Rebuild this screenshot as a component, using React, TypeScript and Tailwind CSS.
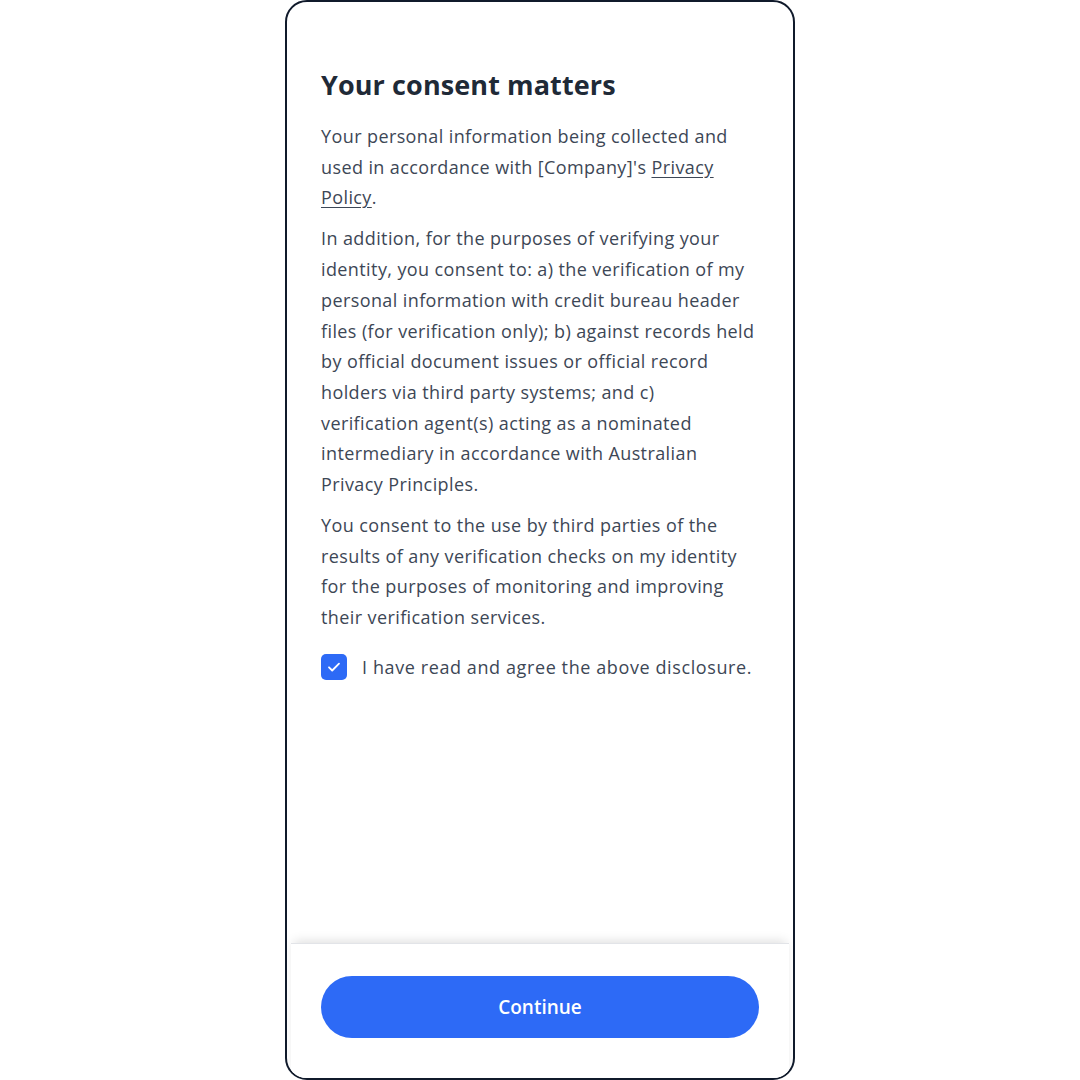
import React, { useState } from 'react';

const PARA_1 = ['Your personal information being collected and', "used in accordance with [Company]'s "];

const PARA_2 = [
  'In addition, for the purposes of verifying your',
  'identity, you consent to: a) the verification of my',
  'personal information with credit bureau header',
  'files (for verification only); b) against records held',
  'by official document issues or official record',
  'holders via third party systems; and c)',
  'verification agent(s) acting as a nominated',
  'intermediary in accordance with Australian',
  'Privacy Principles.',
];

const PARA_3 = [
  'You consent to the use by third parties of the',
  'results of any verification checks on my identity',
  'for the purposes of monitoring and improving',
  'their verification services.',
];

const Lines = ({ lines }: { lines: string[] }) => (
  <p>
    {lines.map((line, i) => (
      <React.Fragment key={i}>
        {line}
        {i < lines.length - 1 && <br />}
      </React.Fragment>
    ))}
  </p>
);

export default function App() {
  const [agreed, setAgreed] = useState(true);

  return (
    <div className="w-[1080px] h-[1080px] bg-white flex justify-center" style={{ fontFamily: '"Open Sans", "Noto Sans", sans-serif' }}>
      <div className="w-[510px] h-[1080px] border-2 border-[#101a2b] rounded-[22px] flex flex-col overflow-hidden bg-white">
        {/* Body */}
        <div className="flex-1 px-[34px] pt-[65px]">
          <h1 className="text-[27px] leading-[36px] font-bold text-[#1f2a37] mb-[18px] tracking-[0.1px]">
            Your consent matters
          </h1>
          <div className="text-[18px] leading-[30.7px] tracking-[0.4px] text-[#3d4756] space-y-[10.3px] whitespace-nowrap">
            <p>
              {PARA_1[0]}
              <br />
              {PARA_1[1]}
              <a href="#" className="underline underline-offset-[3px]">Privacy</a>
              <br />
              <a href="#" className="underline underline-offset-[3px]">Policy</a>.
            </p>
            <Lines lines={PARA_2} />
            <Lines lines={PARA_3} />
          </div>

          {/* Agreement checkbox */}
          <label className="flex items-center gap-[15px] mt-[21px] cursor-pointer">
            <button
              type="button"
              onClick={() => setAgreed((v) => !v)}
              className={`w-[26px] h-[26px] rounded-[5px] flex items-center justify-center shrink-0 ${agreed ? 'bg-[#2d6af6]' : 'border-2 border-[#9aa3af] bg-white'}`}
            >
              {agreed && (
                <svg width="16" height="16" viewBox="0 0 16 16" fill="none">
                  <path d="M3 8.3l3.2 3.2L13 4.7" stroke="white" strokeWidth="1.8" strokeLinecap="round" strokeLinejoin="round" />
                </svg>
              )}
            </button>
            <span className="text-[18px] tracking-[0.6px] text-[#3d4756] whitespace-nowrap">I have read and agree the above disclosure.</span>
          </label>
        </div>

        {/* Footer */}
        <div className="mx-[4px] h-[135px] bg-white shadow-[0_-5px_10px_-3px_rgba(0,0,0,0.13)] border-t border-[#e2e4e8] px-[30px] pt-[32px]">
          <button className="w-full h-[62px] rounded-full bg-[#2d6af6] text-white text-[19px] font-semibold">
            Continue
          </button>
        </div>
      </div>
    </div>
  );
}
